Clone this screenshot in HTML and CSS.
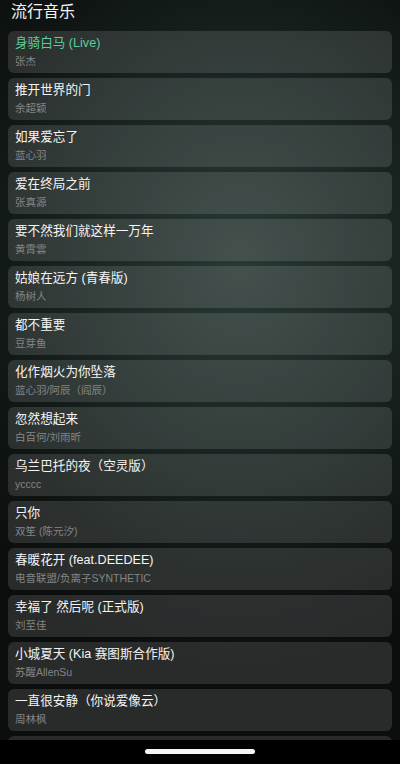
FILE: index.html
```html
<!DOCTYPE html>
<html lang="zh-CN">
<head>
<meta charset="utf-8">
<meta name="viewport" content="width=device-width, initial-scale=1">
<title>流行音乐</title>
<link rel="stylesheet" href="styles.css">
</head>
<body>
<div class="screen">
  <header class="header">流行音乐</header>
  <main class="list">
    <div class="song active"><div class="title">身骑白马 (Live)</div><div class="artist">张杰</div></div>
    <div class="song"><div class="title">推开世界的门</div><div class="artist">余超颖</div></div>
    <div class="song"><div class="title">如果爱忘了</div><div class="artist">蓝心羽</div></div>
    <div class="song"><div class="title">爱在终局之前</div><div class="artist">张真源</div></div>
    <div class="song"><div class="title">要不然我们就这样一万年</div><div class="artist">黄霄雲</div></div>
    <div class="song"><div class="title">姑娘在远方 (青春版)</div><div class="artist">杨树人</div></div>
    <div class="song"><div class="title">都不重要</div><div class="artist">豆芽鱼</div></div>
    <div class="song"><div class="title">化作烟火为你坠落</div><div class="artist">蓝心羽/阿辰（阎辰）</div></div>
    <div class="song"><div class="title">忽然想起来</div><div class="artist">白百何/刘雨昕</div></div>
    <div class="song"><div class="title">乌兰巴托的夜（空灵版）</div><div class="artist">ycccc</div></div>
    <div class="song"><div class="title">只你</div><div class="artist">双笙 (陈元汐)</div></div>
    <div class="song"><div class="title">春暖花开 (feat.DEEDEE)</div><div class="artist">电音联盟/负离子SYNTHETIC</div></div>
    <div class="song"><div class="title">幸福了 然后呢 (正式版)</div><div class="artist">刘至佳</div></div>
    <div class="song"><div class="title">小城夏天 (Kia 赛图斯合作版)</div><div class="artist">苏醒AllenSu</div></div>
    <div class="song"><div class="title">一直很安静（你说爱像云）</div><div class="artist">周林枫</div></div>
    <div class="song"></div>
  </main>
  <footer class="home-bar"><span class="indicator"></span></footer>
</div>
</body>
</html>
```

FILE: styles.css
```css
html, body {
  margin: 0;
  padding: 0;
  background: #000;
}

.screen {
  width: 400px;
  height: 764px;
  display: flex;
  flex-direction: column;
  overflow: hidden;
  font-family: "Liberation Sans", "Noto Sans CJK SC", sans-serif;
  color: #f2f2f2;
  background:
    radial-gradient(ellipse 360px 420px at 60% 34%, #2a3935 0%, #1b2724 40%, #0f1513 75%, #0c0d0d 100%);
}

.header {
  flex: none;
  height: 31px;
  box-sizing: border-box;
  padding: 1px 0 0 11px;
  font-size: 16px;
  line-height: 22px;
  color: #f4f4f4;
}

.list {
  flex: 1;
  overflow: hidden;
  display: flex;
  flex-direction: column;
  gap: 5px;
  padding: 0 8px;
}

.song {
  flex: none;
  height: 42px;
  box-sizing: border-box;
  padding: 3px 7px 0;
  border-radius: 6px;
  background: rgba(255, 255, 255, 0.12);
}

.title {
  font-size: 12.6px;
  line-height: 18px;
  color: #f5f5f5;
  white-space: nowrap;
}

.song.active .title {
  color: #5ccd9c;
}

.artist {
  margin-top: 2px;
  font-size: 10.5px;
  line-height: 14px;
  color: #858585;
  white-space: nowrap;
}

.home-bar {
  flex: none;
  height: 24px;
  background: #000;
  display: flex;
  justify-content: center;
  padding-top: 9px;
  box-sizing: border-box;
}

.indicator {
  width: 110px;
  height: 5px;
  border-radius: 3px;
  background: #f5f5f5;
}
```
